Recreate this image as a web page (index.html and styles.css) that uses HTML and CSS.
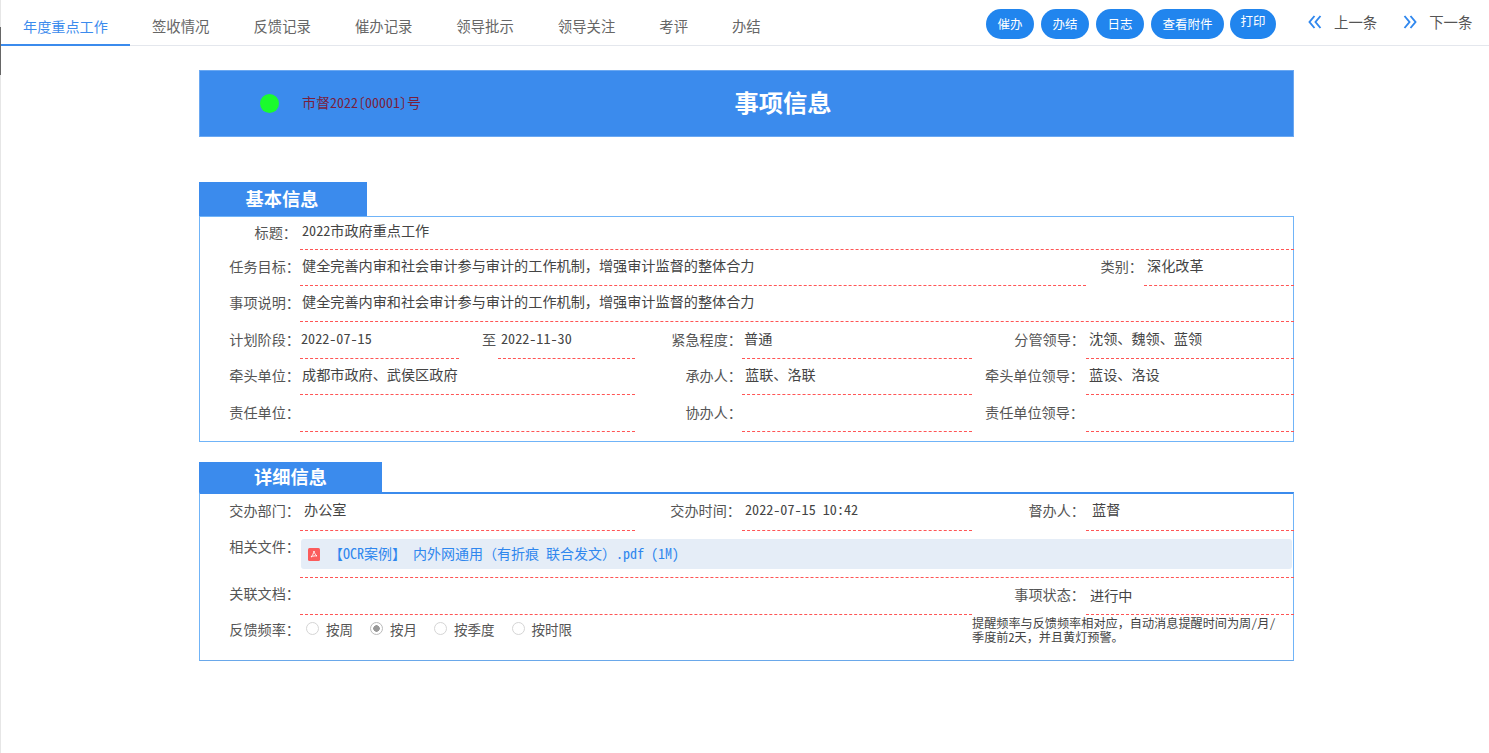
FILE: index.html
```html
<!DOCTYPE html>
<html lang="zh-CN">
<head>
<meta charset="utf-8">
<title>事项信息</title>
<link rel="stylesheet" href="styles.css">
</head>
<body>
<span class="edge-mark"></span>
<header class="topbar">
  <nav class="tabs">
    <a class="tab tab-active">年度重点工作</a>
    <a class="tab">签收情况</a>
    <a class="tab">反馈记录</a>
    <a class="tab">催办记录</a>
    <a class="tab">领导批示</a>
    <a class="tab">领导关注</a>
    <a class="tab">考评</a>
    <a class="tab">办结</a>
  </nav>
  <div class="actions">
    <button class="pill">催办</button>
    <button class="pill">办结</button>
    <button class="pill">日志</button>
    <button class="pill pill-wide">查看附件</button>
    <button class="pill pill-print">打印</button>
  </div>
  <div class="pager">
    <a class="pager-link">
      <svg class="chev" viewBox="0 0 14 14"><path d="M6.500 1 1.500 7l5 6M12.500 1 7.500 7l5 6"/></svg>
      <span>上一条</span>
    </a>
    <a class="pager-link">
      <svg class="chev" viewBox="0 0 14 14"><path d="M1.500 1l5 6-5 6M7.500 1l5 6-5 6"/></svg>
      <span>下一条</span>
    </a>
  </div>
</header>

<main class="page">
  <div class="banner">
    <div class="banner-left">
      <span class="dot"></span>
      <span class="doc-no">市督2022〔00001〕号</span>
    </div>
    <h1 class="banner-title">事项信息</h1>
  </div>

  <section class="section section-basic">
    <h2 class="section-tab tab-basic">基本信息</h2>
    <div class="box box-basic">
      <div class="grid grid-basic">
        <label class="lab lab-first">标题：</label>
        <div class="val val-first s5">2022市政府重点工作</div>

        <label class="lab">任务目标：</label>
        <div class="val s4">健全完善内审和社会审计参与审计的工作机制，增强审计监督的整体合力</div>
        <div class="kind">
          <label class="lab lab-kind">类别：</label>
          <div class="val val-kind">深化改革</div>
        </div>

        <label class="lab">事项说明：</label>
        <div class="val s5">健全完善内审和社会审计参与审计的工作机制，增强审计监督的整体合力</div>

        <label class="lab">计划阶段：</label>
        <div class="range">
          <div class="val val-date">2022-07-15</div>
          <span class="range-to">至</span>
          <div class="val val-date2">2022-11-30</div>
        </div>
        <label class="lab">紧急程度：</label>
        <div class="val">普通</div>
        <label class="lab lab-r">分管领导：</label>
        <div class="val val-r">沈领、魏领、蓝领</div>

        <label class="lab">牵头单位：</label>
        <div class="val">成都市政府、武侯区政府</div>
        <label class="lab">承办人：</label>
        <div class="val val-m">蓝联、洛联</div>
        <label class="lab lab-r2">牵头单位领导：</label>
        <div class="val val-r">蓝设、洛设</div>

        <label class="lab">责任单位：</label>
        <div class="val"></div>
        <label class="lab">协办人：</label>
        <div class="val"></div>
        <label class="lab lab-r2">责任单位领导：</label>
        <div class="val"></div>
      </div>
    </div>
  </section>

  <section class="section section-detail">
    <h2 class="section-tab tab-detail">详细信息</h2>
    <div class="box box-detail">
      <div class="grid grid-detail">
        <label class="lab">交办部门：</label>
        <div class="val val-dept">办公室</div>
        <label class="lab lab-time">交办时间：</label>
        <div class="val val-m">2022-07-15 10:42</div>
        <label class="lab lab-r">督办人：</label>
        <div class="val val-boss">蓝督</div>

        <label class="lab lab-top">相关文件：</label>
        <div class="val val-file s5">
          <a class="file">
            <svg class="pdf" viewBox="0 0 12 13"><rect width="12" height="13" rx="1.500" fill="#fb5c5c"/><path d="M6 3c.5 2 1 3.400 3 5-2-.3-4-.2-6 1 1.500-1.500 2.500-3.500 3-6z" fill="none" stroke="#fff" stroke-width=".9"/></svg>
            <span>【OCR案例】 内外网通用（有折痕 联合发文）.pdf (1M)</span>
          </a>
        </div>

        <label class="lab lab-link">关联文档：</label>
        <div class="val s3"></div>
        <label class="lab lab-r lab-state">事项状态：</label>
        <div class="val val-state">进行中</div>

        <label class="lab lab-freq">反馈频率：</label>
        <div class="radios s3">
          <span class="radio"><i class="circle"></i>按周</span>
          <span class="radio"><i class="circle circle-on"></i>按月</span>
          <span class="radio"><i class="circle"></i>按季度</span>
          <span class="radio"><i class="circle"></i>按时限</span>
        </div>
        <p class="note s2">提醒频率与反馈频率相对应，自动消息提醒时间为周/月/季度前2天，并且黄灯预警。</p>
      </div>
    </div>
  </section>
</main>
</body>
</html>
```

FILE: styles.css
```css
* { box-sizing: border-box; }
html, body { margin: 0; height: 100%; }
body {
  background: #fff;
  color: #555;
  font-family: "Noto Sans Mono CJK SC", "Noto Sans CJK SC", "DejaVu Sans Mono", monospace;
  font-size: 14.15px;
  line-height: 20px;
  border-left: 1px solid #e6e6e6;
  min-height: 753px;
  overflow: hidden;
}
.edge-mark {
  position: absolute;
  left: 0;
  top: 27px;
  width: 1px;
  height: 48px;
  background: #666;
}

/* top bar */
.topbar {
  display: flex;
  align-items: flex-start;
  height: 46px;
  border-bottom: 1px solid #e4e7ed;
  margin-left: -1px;
}
.tabs { display: flex; width: 985px; flex: none; }
.tab {
  height: 46px;
  padding: 16px 22px 0;
  font-family: "Noto Sans CJK SC", sans-serif;
  font-size: 14.375px;
  line-height: 20px;
  color: #666;
  white-space: nowrap;
}
.tab-active {
  padding-left: 23px;
  padding-right: 0;
  width: 130px;
  font-size: 14.15px;
  color: #3b8bed;
  border-bottom: 2px solid #3b8bed;
}
.actions { display: flex; gap: 7px; padding-top: 9px; flex: none; width: 324px; padding-left: 1px; }
.pill {
  width: 48px;
  height: 30px;
  padding: 0;
  border: 0;
  border-radius: 15px;
  background: #2185ee;
  color: #fff;
  font-family: "Noto Sans CJK SC", sans-serif;
  font-size: 12.500px;
  line-height: 24px;
}
.pill-wide { width: 73px; }
.pill-print { width: 46px; margin-left: -1px; padding-bottom: 6px; }
.pager { display: flex; gap: 26px; padding-top: 12px; margin-left: -1px; }
.pager-link {
  display: flex;
  align-items: center;
  gap: 12px;
  font-family: "Noto Sans CJK SC", sans-serif;
  font-size: 14.4px;
  color: #555;
}
.chev { width: 14px; height: 14px; flex: none; }
.chev path { fill: none; stroke: #2f87ee; stroke-width: 1.9; }

/* page */
.page { width: 1095px; margin: 24px 0 0 198px; }
.banner {
  position: relative;
  height: 67px;
  background: #3b8bed;
  border: 1px solid #6aa8f2;
  display: flex;
  align-items: center;
  justify-content: center;
}
.banner-left {
  position: absolute;
  left: 60px;
  top: 21px;
  display: flex;
  align-items: center;
  gap: 23px;
}
.dot { width: 19px; height: 19px; border-radius: 50%; background: #1bfb2d; }
.doc-no {
  color: #7a1f3d;
  font-size: 14px;
  margin-bottom: 2px;
  font-feature-settings: "halt";
  white-space: nowrap;
}
.banner-title { margin: 0 0 4px 73px; color: #fff; font-family: "Noto Sans CJK SC", sans-serif; font-size: 24.3px; line-height: 32px; font-weight: 700; }

.section-basic { margin-top: 45px; }
.section-detail { margin-top: 20px; }
.section-tab {
  margin: 0;
  background: #3b8bed;
  color: #fff;
  font-family: "Noto Sans CJK SC", sans-serif;
  font-size: 18.2px;
  font-weight: 700;
  text-align: center;
}
.tab-basic { width: 168px; height: 34px; line-height: 32px; padding-right: 2px; }
.tab-detail { width: 183px; height: 30px; line-height: 29px; }
.box { border: 1px solid #70b4f8; }
.box-basic { height: 226px; }
.box-detail { height: 169px; border-top: 2px solid #3b8bed; border-bottom-color: #6aa8ea; }

/* form grid */
.grid {
  display: grid;
  grid-template-columns: 100px 335px 107px 230px 114px 208px;
}
.grid-basic { grid-template-rows: 33px 36px 36px 37px 36px 37px; }
.grid-detail { grid-template-rows: 37px 47px 37px 44px; }
.lab {
  display: block;
  align-self: end;
  padding: 0 0 10px 0;
  text-align: right;
  color: #555;
  white-space: nowrap;
}
.lab-first { padding: 0 3px 8px 0; }
.lab-r { padding-right: 1px; }
.lab-r2 { padding-right: 2px; }
.lab-time { padding-right: 1px; }
.lab-top { align-self: start; padding: 5px 0 0; }
.lab-freq { align-self: start; padding: 4px 0 0; }
.lab-link { padding-bottom: 12px; }
.lab-state { padding-bottom: 11px; }
.val {
  display: flex;
  align-items: flex-end;
  padding: 0 0 10px 2px;
  color: #444;
  border-bottom: 1px dashed #f55;
  white-space: pre;
}
.grid-detail > :nth-child(-n+6) { padding-bottom: 11px; }
.val-first { padding-bottom: 9px; }
.s5 { grid-column: span 5; }
.s4 { grid-column: span 4; }
.s3 { grid-column: span 3; }
.s2 { grid-column: span 2; }
.kind { display: grid; grid-template-columns: 58px 150px; }
.lab-kind { padding-right: 1px; }
.val-kind { padding-left: 3px; }
.val-r { padding-left: 3px; }
.val-m { padding-left: 3px; }

.range { display: grid; grid-template-columns: 159px 39px 137px; }
.range-to { align-self: end; padding: 0 0 10px 23px; }
.val-date { padding-left: 1px; }
.val-date2 { padding-left: 3px; }

/* detail */
.val-dept { padding-left: 4px; }
.val-boss { padding-left: 6px; }
.val-state { padding: 0 0 9px 4px; }
.val-file { padding: 8px 2px 8px 1px; align-items: stretch; }
.file {
  display: flex;
  flex: 1;
  align-items: center;
  height: 30px;
  padding: 0 0 2px 7px;
  gap: 9px;
  background: #e5edf7;
  border-radius: 3px;
  color: #2f87ee;
  font-size: 14px;
}
.pdf { width: 12px; height: 13px; flex: none; margin-top: 2px; }
.radios { display: flex; align-items: center; align-self: start; height: 27px; padding-left: 6px; gap: 17px; color: #555; font-size: 13.5px; }
.radio { display: inline-flex; align-items: center; gap: 7px; }
.circle { display: block; width: 13px; height: 13px; border: 1px solid #d5d5d5; border-radius: 50%; background: #fff; }
.circle-on { border-color: #bbb; background: radial-gradient(circle, #999 0 3px, #fff 3.500px); }
.note {
  margin: 0;
  padding: 1px 0 0 0;
  width: 310px;
  font-size: 12.15px;
  line-height: 14px;
  color: #444;
}
```
